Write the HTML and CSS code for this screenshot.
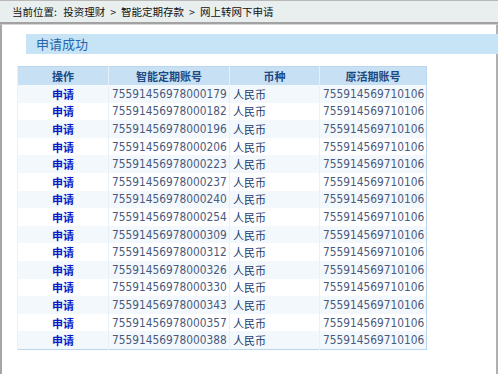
FILE: index.html
```html
<!DOCTYPE html>
<html lang="zh-CN">
<head>
    <meta charset="UTF-8">
    <title>网上转网下申请</title>
    <link rel="stylesheet" href="styles.css">
</head>
<body>
    <div class="crumb">
        <span>当前位置:</span>
        <span class="item">投资理财</span><span class="sep">&gt;</span><span>智能定期存款</span><span class="sep">&gt;</span><span>网上转网下申请</span>
    </div>
    <div class="main">
        <div class="title">申请成功</div>
        <table class="list" id="list">
            <colgroup>
                <col class="c1"><col class="c2"><col class="c3"><col class="c4">
            </colgroup>
            <tr>
                <th>操作</th>
                <th>智能定期账号</th>
                <th>币种</th>
                <th>原活期账号</th>
            </tr>
        </table>
    </div>

    <script>
        const accounts = ['179', '182', '196', '206', '223', '237', '240', '254', '309', '312', '326', '330', '343', '357', '388'];
        const list = document.getElementById('list');
        accounts.forEach(tail => {
            const row = document.createElement('tr');
            row.innerHTML =
                '<td class="op"><a href="#">申请</a></td>' +
                '<td class="num">75591456978000' + tail + '</td>' +
                '<td class="cur">人民币</td>' +
                '<td class="num">755914569710106</td>';
            list.appendChild(row);
        });
    </script>
</body>
</html>
```
FILE: styles.css
```css
body {
    margin: 0;
    font-family: "Noto Sans CJK SC", sans-serif;
    font-size: 11px;
    color: #000;
    background: #fff;
}
.crumb {
    height: 21px;
    line-height: 21px;
    padding-left: 12px;
    background-color: #e9efef;
    border-top: 1px solid #b8b8b8;
    border-bottom: 2px solid #a2a2a2;
    color: #111;
    font-size: 10.5px;
}
.crumb span {
    display: inline-block;
}
.crumb .item {
    margin-left: 4px;
}
.crumb .sep {
    margin: 0 5px;
}
.main {
    height: 347px;
    border-top: 1px solid #d6d6d6;
    border-left: 2px solid #a6a6a6;
    border-right: 2px solid #b0b0b0;
    border-bottom: 2px solid #b0b0b0;
    padding-top: 9px;
}
.title {
    margin-left: 24px;
    margin-right: -2px;
    height: 20px;
    line-height: 20px;
    padding-left: 10px;
    background-color: #c7e3f6;
    color: #2566ad;
    font-size: 13px;
}
.list {
    margin: 12px 0 0 15px;
    width: 409px;
    table-layout: fixed;
    border-collapse: collapse;
    border: 1px solid #bcd6ee;
}
.c1 { width: 91px; }
.c2 { width: 121px; }
.c3 { width: 90px; }
.c4 { width: 107px; }
.list th {
    height: 18px;
    padding: 0;
    background-color: #c8e0f4;
    color: #1b4a82;
    font-weight: bold;
    border-left: 1px solid #e6f0fa;
}
.list td {
    height: 17.6px;
    padding: 0 0 0 3px;
    border-left: 1px solid #e8f0f8;
    line-height: 16px;
}
.list tr:nth-child(odd) td {
    background-color: #f3f8fd;
}
.list td.op {
    text-align: center;
    padding-left: 0;
}
.op a {
    color: #0a18c8;
    font-weight: bold;
    text-decoration: none;
}
.num {
    font-family: "DejaVu Sans Condensed", "DejaVu Sans", sans-serif;
    font-size: 11.8px;
    color: #4a5a7c;
    white-space: nowrap;
}
.cur {
    color: #1a3a6c;
}
```
